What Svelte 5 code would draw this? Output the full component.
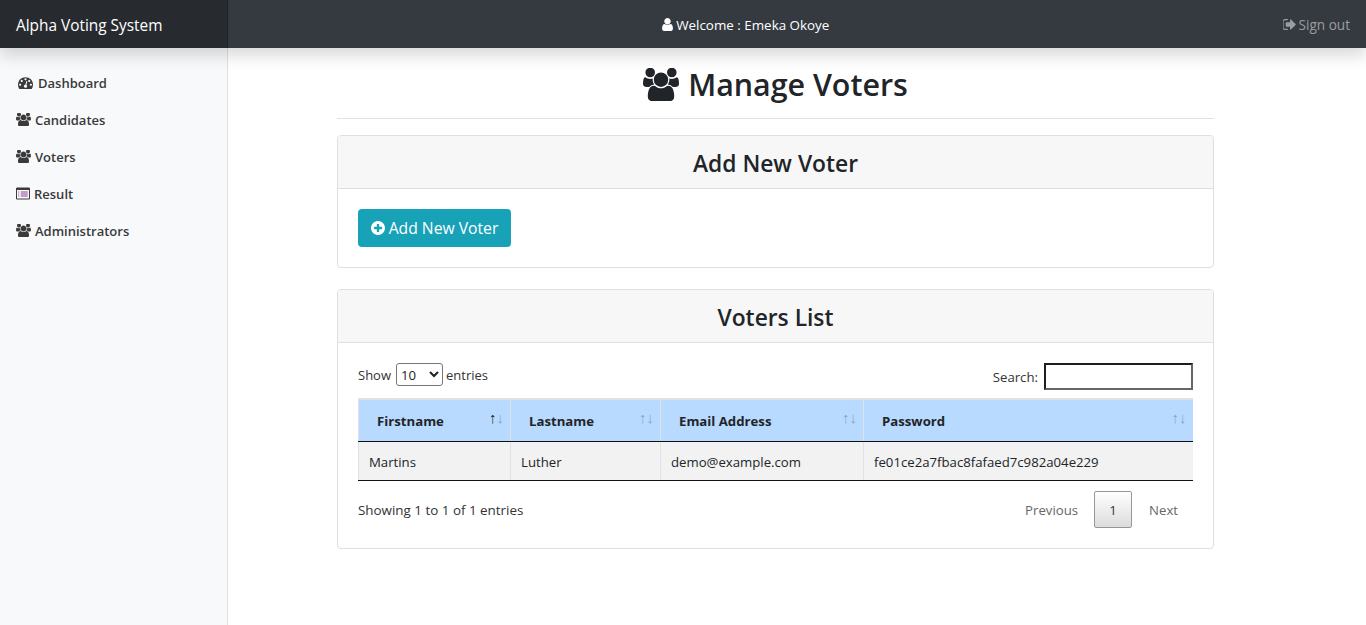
<script>
  const users = "M593 896q-162 5-265 128h-134q-82 0-138-40.500t-56-118.500q0-353 124-353 6 0 43.500 21t97.500 42.500 119 21.500q67 0 133-23-5 37-5 66 0 139 81 256zm1071 637q0 120-73 189.500t-194 69.500h-874q-121 0-194-69.500t-73-189.500q0-53 3.500-103.500t14-109 26.500-108.500 43-97.500 62-81 85.500-53.500 111.500-20q10 0 43 21.500t73 48 107 48 135 21.500 135-21.500 107-48 73-48 43-21.500q61 0 111.500 20t85.500 53.500 62 81 43 97.500 26.500 108.500 14 109 3.500 103.500zm-1024-1277q0 106-75 181t-181 75-181-75-75-181 75-181 181-75 181 75 75 181zm704 384q0 159-112.500 271.500t-271.500 112.500-271.500-112.500-112.500-271.500 112.500-271.500 271.500-112.500 271.500 112.500 112.500 271.500zm576 225q0 78-56 118.500t-138 40.500h-134q-103-123-265-128 81-117 81-256 0-29-5-66 66 23 133 23 59 0 119-21.500t97.500-42.500 43.500-21q124 0 124 353zm-128-609q0 106-75 181t-181 75-181-75-75-181 75-181 181-75 181 75 75 181z";
  const user = "M1536 1399q0 109-62.500 187t-150.500 78h-854q-88 0-150.500-78t-62.500-187q0-85 8.500-160.500t31.500-152 58.500-131 94-89 134.500-34.500q131 128 313 128t313-128q76 0 134.500 34.500t94 89 58.500 131 31.500 152 8.500 160.500zm-256-887q0 159-112.500 271.500t-271.500 112.500-271.500-112.500-112.500-271.500 112.500-271.500 271.500-112.500 271.500 112.500 112.500 271.500z";
  const plus = "M1344 960v-128q0-26-19-45t-45-19h-256v-256q0-26-19-45t-45-19h-128q-26 0-45 19t-19 45v256h-256q-26 0-45 19t-19 45v128q0 26 19 45t45 19h256v256q0 26 19 45t45 19h128q26 0 45-19t19-45v-256h256q26 0 45-19t19-45zm320-64q0 209-103 385.500t-279.500 279.500-385.500 103-385.500-103-279.500-279.500-103-385.500 103-385.500 279.500-279.500 385.500-103 385.500 103 279.500 279.500 103 385.500z";
  const signout = "M704 1440q0 4 1 20t.5 26.500-3 23.500-10 19.500-20.500 6.500h-320q-119 0-203.500-84.500t-84.500-203.500v-704q0-119 84.500-203.500t203.500-84.500h320q13 0 22.500 9.500t9.500 22.500q0 4 1 20t.5 26.500-3 23.500-10 19.500-20.500 6.500h-320q-66 0-113 47t-47 113v704q0 66 47 113t113 47h312l11.500 1 11.500 3 8 5.500 7 9 2 13.500zm928-544q0 26-19 45l-544 544q-19 19-45 19t-45-19-19-45v-288h-448q-26 0-45-19t-19-45v-384q0-26 19-45t45-19h448v-288q0-26 19-45t45-19 45 19l544 544q19 19 19 45z";
  const dashboard = "M384 1152q0-53-37.500-90.500t-90.500-37.500-90.500 37.500-37.500 90.500 37.500 90.500 90.500 37.500 90.500-37.500 37.500-90.500zm192-448q0-53-37.500-90.500t-90.500-37.500-90.500 37.500-37.500 90.500 37.500 90.500 90.500 37.500 90.500-37.500 37.500-90.500zm428 481l101-382q6-26-7.500-48.500t-38.500-29.500-48 6.500-30 39.500l-101 382q-60 5-107 43.500t-63 98.500q-20 77 20 146t117 89 146-20 89-117q16-60-6-117t-72-91zm660-33q0-53-37.500-90.500t-90.500-37.500-90.500 37.500-37.500 90.500 37.500 90.500 90.500 37.500 90.500-37.500 37.500-90.500zm-640-640q0-53-37.500-90.500t-90.500-37.500-90.500 37.500-37.500 90.500 37.500 90.500 90.500 37.500 90.500-37.500 37.500-90.500zm448 192q0-53-37.500-90.500t-90.500-37.500-90.500 37.500-37.500 90.500 37.500 90.500 90.500 37.500 90.500-37.500 37.500-90.500zm320 448q0 261-141 483-19 29-54 29h-1402q-35 0-54-29-141-221-141-483 0-182 71-348t191-286 286-191 348-71 348 71 286 191 191 286 71 348z";
  const listFrame = "M160 128h1472q66 0 113 47t47 113v1216q0 66-47 113t-113 47h-1472q-66 0-113-47t-47-113v-1216q0-66 47-113t113-47zM128 448v1056q0 32 32 32h1472q32 0 32-32v-1056z";
  const listRows = "M288 640h128v128h-128zM608 640h896v128h-896zM288 896h128v128h-128zM608 896h896v128h-896zM288 1152h128v128h-128zM608 1152h896v128h-896z";

  const sideLinks = [
    { label: "Dashboard", d: dashboard, vb: "0 128 1792 1536", w: 15, extra: true },
    { label: "Candidates", d: users, vb: "0 128 1920 1536", w: 15 },
    { label: "Voters", d: users, vb: "0 128 1920 1536", w: 15 },
    { label: "Result", vb: "0 128 1792 1536", w: 14, list: true },
    { label: "Administrators", d: users, vb: "0 128 1920 1536", w: 15 },
  ];

  const columns = [
    { label: "Firstname", width: 152, active: true },
    { label: "Lastname", width: 150 },
    { label: "Email Address", width: 203 },
    { label: "Password", width: 329 },
  ];
  const row = ["Martins", "Luther", "demo@example.com", "fe01ce2a7fbac8fafaed7c982a04e229"];
</script>

<div class="page">
  <header class="navbar">
    <div class="brand">Alpha Voting System</div>
    <div class="welcome">
      <svg class="ico" viewBox="128 128 1536 1536" width="13" height="13" fill="currentColor"><path d={user} /></svg>
      <span>Welcome : Emeka Okoye</span>
    </div>
    <a class="signout" href="#out">
      <svg class="ico" viewBox="128 128 1536 1536" width="13" height="13" fill="currentColor"><path d={signout} /></svg>
      <span>Sign out</span>
    </a>
  </header>

  <div class="body">
    <nav class="sidebar">
      {#each sideLinks as link}
        <a class="side-link" class:dash={link.extra} href="#x">
          <svg class="ico" viewBox={link.vb} width={link.w} height="13" fill="currentColor">
            {#if link.list}
              <path fill-rule="evenodd" d={listFrame} />
              <path fill="#8e3f9c" d={listRows} />
            {:else}
              <path d={link.d} />
            {/if}
          </svg>
          <span>{link.label}</span>
        </a>
      {/each}
    </nav>

    <main class="main">
      <h1>
        <svg viewBox="0 128 1920 1536" width="36" height="33" fill="currentColor"><path d={users} /></svg>
        <span>Manage Voters</span>
      </h1>
      <hr />

      <section class="card">
        <h2 class="card-header">Add New Voter</h2>
        <div class="card-body add-body">
          <button class="btn">
            <svg viewBox="128 128 1536 1536" width="14" height="14" fill="currentColor"><path d={plus} /></svg>
            <span>Add New Voter</span>
          </button>
        </div>
      </section>

      <section class="card">
        <h2 class="card-header">Voters List</h2>
        <div class="card-body list-body">
          <div class="tools">
            <label class="show"><span>Show</span>
              <select>
                <option>10</option>
                <option>25</option>
              </select>
              <span>entries</span></label>
            <label class="search">Search: <input type="search" /></label>
          </div>

          <table>
            <thead>
              <tr>
                {#each columns as col}
                  <th style="width: {col.width}px">
                    {col.label}
                    <span class="sort"><i class:on={col.active}>↑</i><i>↓</i></span>
                  </th>
                {/each}
              </tr>
            </thead>
            <tbody>
              <tr>
                {#each row as cell}
                  <td>{cell}</td>
                {/each}
              </tr>
            </tbody>
          </table>

          <div class="foot">
            <div class="info">Showing 1 to 1 of 1 entries</div>
            <div class="pager">
              <span class="pg prev">Previous</span>
              <span class="pg current">1</span>
              <span class="pg">Next</span>
            </div>
          </div>
        </div>
      </section>
    </main>
  </div>
</div>

<style>
  :global(body) {
    margin: 0;
    background: #fff;
    font-family: "Open Sans", "Noto Sans", sans-serif;
    color: #212529;
  }

  .page {
    min-height: 625px;
    display: flex;
    flex-direction: column;
  }

  .ico {
    flex-shrink: 0;
  }

  .navbar {
    height: 48px;
    background: #343a40;
    display: flex;
    align-items: center;
    color: #fff;
    position: relative;
    z-index: 2;
    box-shadow: 0 8px 16px rgba(0, 0, 0, 0.15);
  }

  .brand {
    width: 228px;
    height: 100%;
    box-sizing: border-box;
    padding: 2px 0 0 16px;
    display: flex;
    align-items: center;
    background: rgba(0, 0, 0, 0.25);
    box-shadow: inset -1px 0 0 rgba(0, 0, 0, 0.25);
    font-size: 15.4px;
  }

  .welcome {
    flex: 1;
    display: flex;
    justify-content: center;
    align-items: center;
    gap: 2px;
    padding: 1px 20px 0 0;
    font-size: 13.4px;
    font-weight: 500;
  }

  .signout {
    padding-right: 16px;
    display: flex;
    align-items: center;
    gap: 3px;
    color: rgba(255, 255, 255, 0.5);
    font-size: 13.6px;
    text-decoration: none;
  }

  .body {
    flex: 1;
    display: flex;
  }

  .sidebar {
    width: 228px;
    box-sizing: border-box;
    background: #f8f9fa;
    border-right: 1px solid #dfe0e1;
    padding-top: 16px;
    display: flex;
    flex-direction: column;
  }

  .side-link {
    height: 37px;
    box-sizing: border-box;
    padding-left: 16px;
    display: flex;
    align-items: center;
    gap: 4px;
    color: #3a3a3a;
    font-size: 13px;
    font-weight: 600;
    text-decoration: none;
  }

  .side-link.dash {
    padding-left: 18px;
    gap: 5px;
  }

  .main {
    width: 877px;
    margin-left: 109px;
    display: flex;
    flex-direction: column;
  }

  h1 {
    margin: 0;
    padding-top: 3px;
    height: 67px;
    box-sizing: content-box;
    display: flex;
    justify-content: center;
    align-items: center;
    gap: 9px;
    font-size: 30.4px;
    font-weight: 600;
    line-height: 38px;
    color: #212529;
  }

  hr {
    width: 100%;
    margin: 0 0 16px;
    border: 0;
    border-top: 1px solid #dee2e6;
  }

  .card {
    border: 1px solid #dfdfdf;
    border-radius: 4px;
    margin-bottom: 21px;
    overflow: hidden;
  }

  .card-header {
    margin: 0;
    height: 53px;
    box-sizing: border-box;
    padding-top: 3px;
    background: #f7f7f7;
    border-bottom: 1px solid #dfdfdf;
    display: flex;
    align-items: center;
    justify-content: center;
    font-size: 22.8px;
    font-weight: 600;
  }

  .add-body {
    padding: 20px;
    height: 78px;
    box-sizing: border-box;
  }

  .btn {
    height: 38px;
    width: 153px;
    border: 0;
    border-radius: 4px;
    background: #17a2b8;
    color: #fff;
    display: flex;
    align-items: center;
    justify-content: center;
    gap: 4px;
    font: inherit;
    font-size: 15.7px;
  }

  .list-body {
    padding: 20px 20px 0;
    height: 205px;
    box-sizing: border-box;
  }

  .tools {
    display: flex;
    justify-content: space-between;
    align-items: flex-start;
    height: 35px;
    font-size: 13.2px;
  }

  .show {
    display: flex;
    align-items: center;
    gap: 4px;
    color: #333;
    height: 23px;
    font-size: 13px;
  }

  .show select {
    margin: 0 -1px 0 1px;
  }

  select {
    width: 47px;
    height: 23px;
    font: inherit;
    font-size: 13.2px;
    background: #fff;
    color: #222;
    border: 1px solid #767676;
    border-radius: 3px;
  }

  .search {
    display: flex;
    align-items: center;
    gap: 6px;
    color: #333;
  }

  input {
    width: 149px;
    height: 27px;
    box-sizing: border-box;
    border: 2px solid;
    border-color: #1e1e1e #666 #666 #1e1e1e;
    padding: 0 4px;
    outline: 0;
    background: #fff;
  }

  table {
    width: 834px;
    table-layout: fixed;
    border-collapse: collapse;
    font-size: 13.2px;
  }

  th {
    position: relative;
    height: 42px;
    box-sizing: border-box;
    padding: 2px 18px 0 18px;
    background: #b8daff;
    border-top: 2px solid #dee2e6;
    border-left: 1px solid #dee2e6;
    border-bottom: 1px solid #111;
    text-align: left;
    font-weight: 700;
    color: #212529;
  }

  .sort {
    position: absolute;
    right: 6px;
    top: 9px;
    font-size: 15px;
    line-height: 16px;
  }

  .sort i {
    font-style: normal;
    font-weight: 400;
    opacity: 0.3;
  }

  .sort i.on {
    opacity: 1;
  }

  td {
    height: 39px;
    box-sizing: border-box;
    padding: 2px 10px 0;
    background: #f2f2f2;
    border-left: 1px solid #dee2e6;
    border-bottom: 1px solid #111;
    color: #212529;
  }

  .foot {
    display: flex;
    justify-content: space-between;
    align-items: center;
    margin-top: 10px;
    height: 38px;
    font-size: 13.4px;
    color: #333;
  }

  .pager {
    display: flex;
    align-items: center;
    font-size: 13.2px;
  }

  .pg {
    padding: 0 15px;
    height: 37px;
    display: flex;
    align-items: center;
    color: #666;
  }

  .pg.prev {
    padding-right: 14px;
  }

  .pg.current {
    width: 38px;
    padding: 0;
    box-sizing: border-box;
    justify-content: center;
    border: 1px solid #979797;
    border-radius: 2px;
    background: linear-gradient(to bottom, #fff 0%, #dcdcdc 100%);
    color: #333;
    margin: 0 2px;
  }
</style>
